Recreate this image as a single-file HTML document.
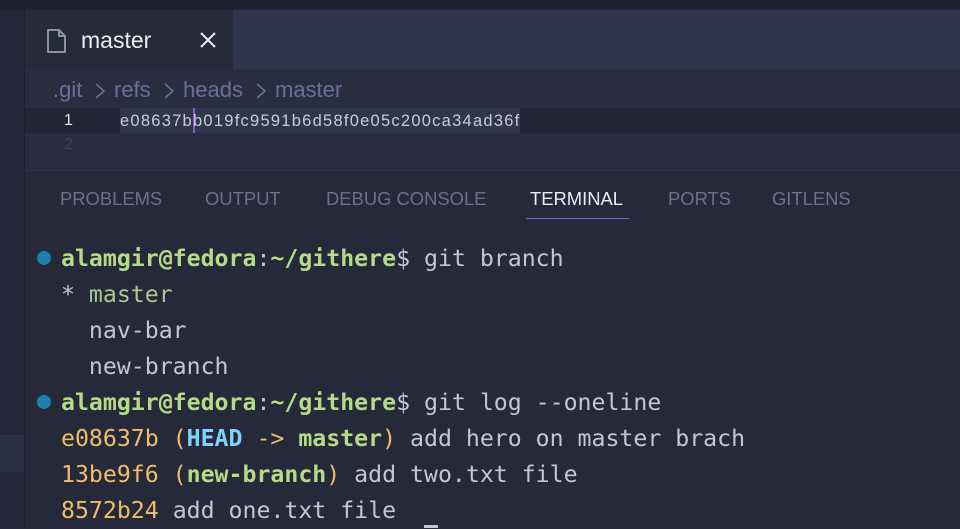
<!DOCTYPE html>
<html><head><meta charset="utf-8"><style>
*{margin:0;padding:0;box-sizing:border-box}
body{width:960px;height:528px;overflow:hidden;background:#262939;position:relative;font-family:"Liberation Sans",sans-serif}
.a{position:absolute}
.t{position:absolute;white-space:pre;font-family:"DejaVu Sans Mono",monospace;font-size:23.2px;color:#c3c6d6;line-height:36px}
.g{color:#b4dc86;font-weight:bold}
.gn{color:#a8c890}
.y{color:#f0bd6a}
.c{color:#7dd3fc;font-weight:bold}
.tab{position:absolute;top:187px;font-size:18.4px;color:#6c7089;line-height:24px}
.bc{position:absolute;top:76px;font-size:22px;color:#6b6f98;line-height:28px}
</style></head><body>
<div class="a" style="left:0;top:0;width:960px;height:10px;background:#202233"></div>
<div class="a" style="left:0;top:10px;width:24px;height:518px;background:#24273a"></div>
<div class="a" style="left:0;top:435px;width:24px;height:37px;background:#2c3044"></div>
<div class="a" style="left:24px;top:10px;width:1px;height:518px;background:#1e2030"></div>
<div class="a" style="left:25px;top:10px;width:935px;height:59px;background:#31354b"></div>
<div class="a" style="left:25px;top:10px;width:208px;height:59px;background:#262a3b"></div>
<svg class="a" style="left:46px;top:28px" width="22" height="26" viewBox="0 0 22 26"><path d="M2 2h11l6 6v16H2z M13 2v6h6" fill="none" stroke="#8a92a6" stroke-width="2" stroke-linejoin="round"/></svg>
<div class="a" style="left:81px;top:26px;font-size:23px;color:#eef0f6;line-height:28px">master</div>
<svg class="a" style="left:199px;top:31px" width="18" height="18" viewBox="0 0 18 18"><path d="M2 2L16 16M16 2L2 16" stroke="#e8eaf0" stroke-width="2"/></svg>
<div class="a" style="left:25px;top:69px;width:935px;height:101px;background:#2a2d3f"></div>
<div class="bc" style="left:53px">.git</div>
<div class="bc" style="left:114px">refs</div>
<div class="bc" style="left:183px">heads</div>
<div class="bc" style="left:275px">master</div>
<svg class="a" style="left:94px;top:81px" width="180" height="20" viewBox="0 0 180 20"><path d="M2 3l8 7-8 7M71 3l8 7-8 7M163 3l8 7-8 7" fill="none" stroke="#6b6f98" stroke-width="1.6"/></svg>
<div class="a" style="left:25px;top:108px;width:935px;height:25px;background:#232536"></div>
<div class="a" style="left:120px;top:108px;width:400px;height:25px;background:#31354b"></div>
<div class="a" style="left:193px;top:108px;width:2px;height:25px;background:#8a5cc8"></div>
<div class="a" style="left:64px;top:110px;font-size:16px;color:#e8eaf0;line-height:22px">1</div>
<div class="a" style="left:64px;top:134px;font-size:16px;color:#3d4157;line-height:22px">2</div>
<div class="a" style="left:120px;top:110px;font-size:16.5px;color:#c8cbd8;line-height:22px;letter-spacing:1.25px">e08637bb019fc9591b6d58f0e05c200ca34ad36f</div>
<div class="a" style="left:25px;top:170px;width:935px;height:1px;background:#2f3246"></div>
<div class="tab" style="left:60px">PROBLEMS</div>
<div class="tab" style="left:205px">OUTPUT</div>
<div class="tab" style="left:326px">DEBUG CONSOLE</div>
<div class="tab" style="left:530px;color:#e8ecf4">TERMINAL</div>
<div class="tab" style="left:668px">PORTS</div>
<div class="tab" style="left:772px">GITLENS</div>
<div class="a" style="left:526px;top:218px;width:103px;height:1px;background:#8a5cc8"></div>
<div class="a" style="left:37px;top:251px;width:14px;height:14px;border-radius:50%;background:#1d7fae"></div>
<div class="a" style="left:37px;top:395px;width:14px;height:14px;border-radius:50%;background:#1d7fae"></div>
<div class="t" style="left:61px;top:241px"><span class="g">alamgir@fedora</span>:<span class="g">~/githere</span>$ git branch
* <span class="gn">master</span>
  nav-bar
  new-branch
<span class="g">alamgir@fedora</span>:<span class="g">~/githere</span>$ git log --oneline
<span class="y">e08637b (</span><span class="c">HEAD</span><span class="y"> -&gt; </span><span class="g">master</span><span class="y">)</span> add hero on master brach
<span class="y">13be9f6 (</span><span class="g">new-branch</span><span class="y">)</span> add two.txt file
<span class="y">8572b24</span> add one.txt file</div>
<div class="a" style="left:424px;top:525px;width:14px;height:3px;background:#c3c6d6"></div>
</body></html>
